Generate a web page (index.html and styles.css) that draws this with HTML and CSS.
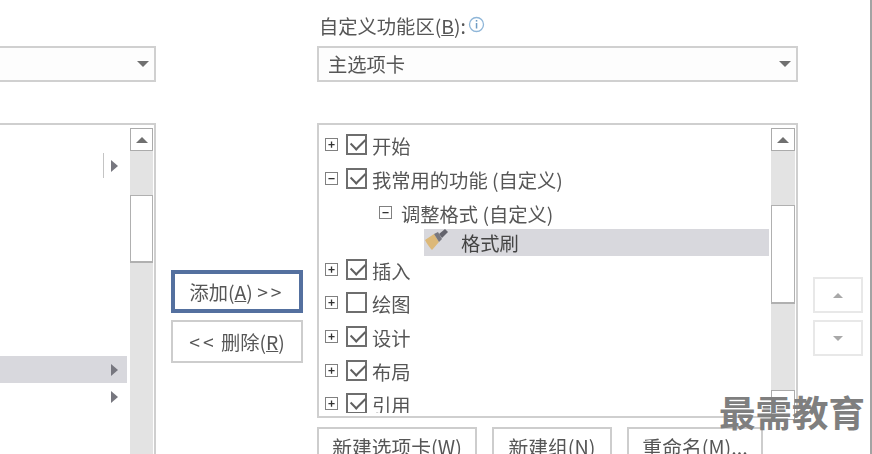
FILE: index.html
```html
<!DOCTYPE html>
<html lang="zh-CN">
<head>
  <meta charset="UTF-8">
  <title>自定义功能区</title>
  <link rel="stylesheet" href="styles.css">
</head>
<body>
  <div class="dialog">
    <div class="col-left">
      <div class="select">
        <span class="select-text"></span>
        <span class="arrow-down"></span>
      </div>
      <div class="list list-left">
        <div class="list-body">
          <div class="cmd cmd-split"><span class="split-line"></span><span class="arrow-right"></span></div>
          <div class="cmd cmd-selected"><span class="arrow-right"></span></div>
          <div class="cmd"><span class="arrow-right"></span></div>
        </div>
        <div class="scroll">
          <div class="scroll-btn"><span class="arrow-up"></span></div>
          <div class="scroll-thumb thumb-left"></div>
        </div>
      </div>
    </div>

    <div class="col-mid">
      <button class="btn btn-add">添加(<u>A</u>) <span class="arrows">&gt;&gt;</span></button>
      <button class="btn"><span class="arrows">&lt;&lt;</span> 删除(<u>R</u>)</button>
    </div>

    <div class="col-right">
      <div class="field-label">
        <span>自定义功能区(<u>B</u>):</span>
        <svg class="info" width="17" height="17" viewBox="0 0 17 17">
          <circle cx="8.5" cy="8.5" r="7" fill="none" stroke="#8fb6d8" stroke-width="1.3"/>
          <rect x="7.8" y="4" width="1.5" height="1.6" fill="#6f9cc4"/>
          <rect x="7.8" y="7" width="1.5" height="5.5" fill="#6f9cc4"/>
        </svg>
      </div>
      <div class="select">
        <span class="select-text">主选项卡</span>
        <span class="arrow-down"></span>
      </div>
      <div class="list list-right">
        <div class="list-body tree">
          <div class="tree-row"><span class="exp">+</span><span class="check on"></span><span class="tree-text">开始</span></div>
          <div class="tree-row"><span class="exp">−</span><span class="check on"></span><span class="tree-text">我常用的功能 (自定义)</span></div>
          <div class="tree-row tree-group"><span class="exp">−</span><span class="tree-text">调整格式 (自定义)</span></div>
          <div class="tree-row tree-cmd">
            <svg class="brush" width="26" height="24" viewBox="0 0 26 24">
              <path d="M1 12 L10 6 L15 14 L8 22 C6 20 3 16 1 12 Z" fill="#dcb878"/>
              <path d="M10 6 L15 14 L18 11 L14 4 Z" fill="#77777f"/>
              <path d="M15 6 L21 1 L24 4 L18 10 Z" fill="#63636c"/>
            </svg>
            <span>格式刷</span>
          </div>
          <div class="tree-row tree-after"><span class="exp">+</span><span class="check on"></span><span class="tree-text">插入</span></div>
          <div class="tree-row"><span class="exp">+</span><span class="check"></span><span class="tree-text">绘图</span></div>
          <div class="tree-row"><span class="exp">+</span><span class="check on"></span><span class="tree-text">设计</span></div>
          <div class="tree-row"><span class="exp">+</span><span class="check on"></span><span class="tree-text">布局</span></div>
          <div class="tree-row"><span class="exp">+</span><span class="check on"></span><span class="tree-text">引用</span></div>
        </div>
        <div class="scroll">
          <div class="scroll-btn"><span class="arrow-up"></span></div>
          <div class="scroll-thumb thumb-right"></div>
          <div class="scroll-btn scroll-btn-end"></div>
        </div>
      </div>
      <div class="bottom-btns">
        <button class="btn btn-new-tab">新建选项卡(<u>W</u>)</button>
        <button class="btn btn-new-group">新建组(<u>N</u>)</button>
        <button class="btn btn-rename">重命名(<u>M</u>)...</button>
      </div>
    </div>

    <div class="col-spin">
      <button class="spin"><span class="arrow-up arrow-light"></span></button>
      <button class="spin"><span class="arrow-down arrow-light"></span></button>
    </div>
  </div>
  <div class="watermark">最需教育</div>
</body>
</html>
```

FILE: styles.css
```css
* {
  box-sizing: border-box;
}

html, body {
  margin: 0;
  height: 454px;
  overflow: hidden;
  background: #fff;
}

body {
  position: relative;
  font-family: "Noto Sans CJK SC", "Noto Sans", sans-serif;
  font-size: 19.3px;
  color: #565656;
}

.dialog {
  display: flex;
  width: 872px;
  height: 454px;
  border-right: 2px solid #a3a3a3;
  overflow: hidden;
  filter: blur(0.5px);
}

.col-left {
  width: 156px;
  flex-shrink: 0;
  padding-top: 46px;
}

.col-mid {
  width: 161px;
  flex-shrink: 0;
  padding: 270px 14px 0 15px;
  display: flex;
  flex-direction: column;
  gap: 7px;
}

.col-right {
  width: 481px;
  flex-shrink: 0;
  padding-top: 13px;
}

.col-spin {
  width: 50px;
  margin-left: 15px;
  flex-shrink: 0;
  padding-top: 277px;
  display: flex;
  flex-direction: column;
  gap: 7px;
}

.field-label {
  height: 26px;
  margin-bottom: 7px;
  display: flex;
  align-items: center;
  gap: 2px;
  padding-left: 2px;
  line-height: 26px;
}

.info {
  margin-top: -3px;
}

.select {
  height: 36px;
  border: 2px solid #d0d0d0;
  display: flex;
  align-items: center;
  justify-content: space-between;
  padding: 0 5px 0 9px;
  background: #fdfdfd;
}

.col-left .select {
  border-left: none;
  padding-right: 5px;
}

.list {
  height: 295px;
  margin-top: 41px;
  border: 2px solid #cfcfcf;
  display: flex;
  padding: 3px 1px 3px 3px;
}

.list-left {
  height: 340px;
  border-left: none;
  padding-left: 0;
}

.list-body {
  flex: 1;
  display: flex;
  flex-direction: column;
  overflow: hidden;
  min-width: 0;
}

.list-left .list-body {
  padding-top: 24px;
  margin-right: 3px;
}

.cmd {
  height: 27px;
  flex-shrink: 0;
  display: flex;
  align-items: center;
  justify-content: flex-end;
  padding-right: 9px;
}

.cmd-split {
  margin-bottom: 177px;
}

.cmd-selected {
  background: #d8d8dd;
}

.split-line {
  width: 1px;
  height: 25px;
  background: #c4c4c4;
  margin-right: 7px;
}

.scroll {
  width: 24px;
  flex-shrink: 0;
  display: flex;
  flex-direction: column;
  background: #e3e3e3;
}

.list-left .scroll {
  width: 23px;
}

.scroll-btn {
  height: 23px;
  flex-shrink: 0;
  background: #fff;
  border: 1px solid #ababab;
  display: flex;
  align-items: center;
  justify-content: center;
}

.scroll-btn-end {
  margin-top: 86px;
  height: 30px;
}

.scroll-thumb {
  flex-shrink: 0;
  background: #fff;
  border: 1px solid #b0b0b0;
  border-bottom-width: 2px;
}

.thumb-left {
  height: 68px;
  margin-top: 44px;
}

.thumb-right {
  height: 99px;
  margin-top: 54px;
}

.arrow-down,
.arrow-up,
.arrow-right {
  display: block;
  width: 0;
  height: 0;
  border-style: solid;
  border-color: transparent;
}

.arrow-down {
  border-width: 6px 6px 0;
  border-top-color: #707070;
}

.arrow-up {
  border-width: 0 6px 6px;
  border-bottom-color: #707070;
}

.arrow-right {
  border-width: 6px 0 6px 7px;
  border-left-color: #77777f;
}

.arrow-light.arrow-up {
  border-width: 0 5px 5px;
  border-bottom-color: #a8a8a8;
}

.arrow-light.arrow-down {
  border-width: 5px 5px 0;
  border-top-color: #a8a8a8;
}

.tree {
  padding-right: 2px;
}

.tree-row {
  height: 33.7px;
  flex-shrink: 0;
  display: flex;
  align-items: center;
  padding-left: 3px;
  white-space: nowrap;
}

.tree-text {
  padding-top: 3px;
}

.exp {
  width: 13px;
  height: 13px;
  border: 1px solid #808080;
  font-size: 12px;
  line-height: 10px;
  font-weight: 700;
  text-align: center;
  color: #333;
  margin-right: 8px;
  flex-shrink: 0;
}

.check {
  width: 21px;
  height: 21px;
  border: 2px solid #6e6e6e;
  margin-right: 5px;
  flex-shrink: 0;
  position: relative;
}

.check.on::after {
  content: "";
  position: absolute;
  left: 3px;
  top: 2px;
  width: 12px;
  height: 7px;
  border-left: 2px solid #5f5f5f;
  border-bottom: 2px solid #5f5f5f;
  transform: rotate(-45deg);
}

.tree-group {
  padding-left: 57px;
  height: 34px;
}

.tree-group .exp {
  margin-right: 9px;
}

.tree-cmd {
  height: 27px;
  padding-left: 0;
  margin-left: 102px;
  background: #d8d8dd;
  color: #444;
  margin-bottom: -4px;
}

.brush {
  margin-right: 11px;
  margin-top: -5px;
  flex-shrink: 0;
}

.btn {
  height: 43px;
  flex-shrink: 0;
  background: #fff;
  border: 2px solid #cdcdcd;
  font-family: inherit;
  font-size: 19.3px;
  color: #565656;
  padding: 0;
}

.col-mid .btn {
  width: 132px;
}

.arrows {
  letter-spacing: 3px;
}

.btn-add {
  border: 4px solid #54709f;
  box-shadow: inset 0 0 0 1px #fff;
}

.bottom-btns {
  display: flex;
  gap: 15px;
  margin-top: 9px;
}

.bottom-btns .btn {
  font-size: 19.8px;
  padding-bottom: 5px;
}

.btn-new-tab {
  width: 160px;
}

.btn-new-group {
  width: 120px;
}

.btn-rename {
  width: 136px;
}

.spin {
  width: 50px;
  height: 36px;
  flex-shrink: 0;
  background: #fff;
  border: 2px solid #e8e8e8;
  padding: 0;
  display: flex;
  align-items: center;
  justify-content: center;
}

.watermark {
  position: absolute;
  left: 719px;
  top: 390px;
  font-size: 36.5px;
  line-height: 44px;
  font-weight: 700;
  color: #7f7f7f;
  white-space: nowrap;
}
```
